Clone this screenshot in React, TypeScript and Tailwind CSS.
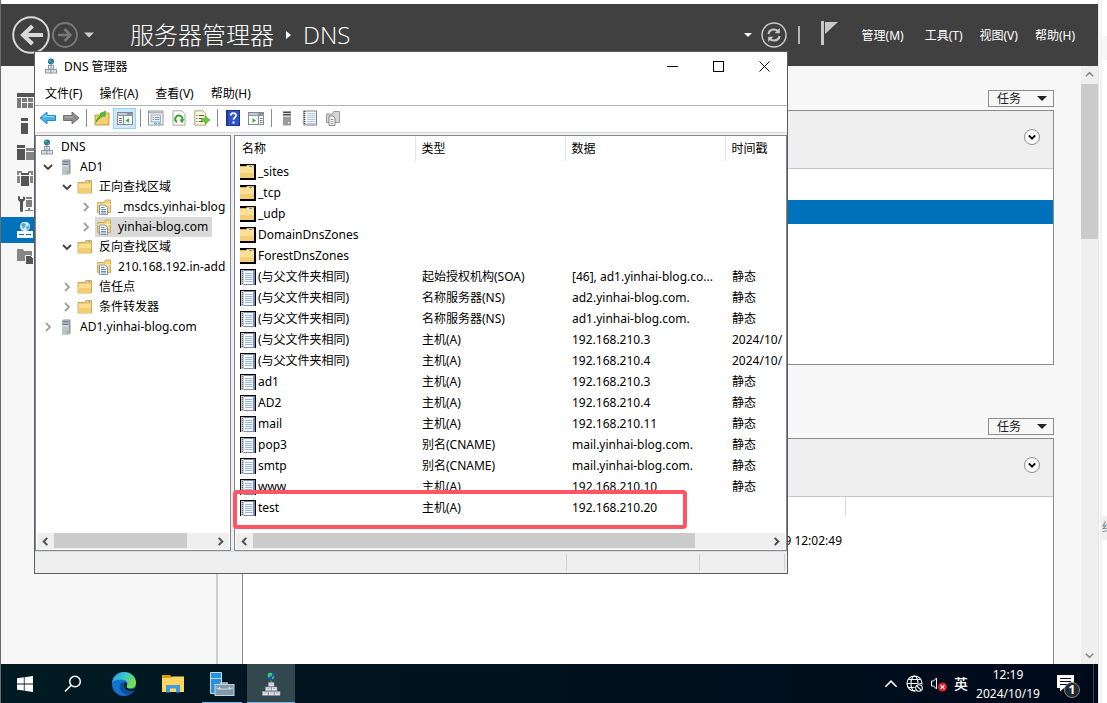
import React from 'react';

type IconProps = { className?: string };

type TreeNode = {
    level: number;
    label: string;
    icon: 'dns' | 'server' | 'folder' | 'zone';
    state?: 'open' | 'closed';
    selected?: boolean;
};

type DnsRecord = {
    name: string;
    type?: string;
    data?: string;
    stamp?: string;
};

const TREE: TreeNode[] = [
    { level: 0, label: 'DNS', icon: 'dns' },
    { level: 1, label: 'AD1', icon: 'server', state: 'open' },
    { level: 2, label: '正向查找区域', icon: 'folder', state: 'open' },
    { level: 3, label: '_msdcs.yinhai-blog', icon: 'zone', state: 'closed' },
    { level: 3, label: 'yinhai-blog.com', icon: 'zone', state: 'closed', selected: true },
    { level: 2, label: '反向查找区域', icon: 'folder', state: 'open' },
    { level: 3, label: '210.168.192.in-add', icon: 'zone' },
    { level: 2, label: '信任点', icon: 'folder', state: 'closed' },
    { level: 2, label: '条件转发器', icon: 'folder', state: 'closed' },
    { level: 1, label: 'AD1.yinhai-blog.com', icon: 'server', state: 'closed' },
];

const RECORDS: DnsRecord[] = [
    { name: '_sites' },
    { name: '_tcp' },
    { name: '_udp' },
    { name: 'DomainDnsZones' },
    { name: 'ForestDnsZones' },
    { name: '(与父文件夹相同)', type: '起始授权机构(SOA)', data: '[46], ad1.yinhai-blog.co...', stamp: '静态' },
    { name: '(与父文件夹相同)', type: '名称服务器(NS)', data: 'ad2.yinhai-blog.com.', stamp: '静态' },
    { name: '(与父文件夹相同)', type: '名称服务器(NS)', data: 'ad1.yinhai-blog.com.', stamp: '静态' },
    { name: '(与父文件夹相同)', type: '主机(A)', data: '192.168.210.3', stamp: '2024/10/' },
    { name: '(与父文件夹相同)', type: '主机(A)', data: '192.168.210.4', stamp: '2024/10/' },
    { name: 'ad1', type: '主机(A)', data: '192.168.210.3', stamp: '静态' },
    { name: 'AD2', type: '主机(A)', data: '192.168.210.4', stamp: '静态' },
    { name: 'mail', type: '主机(A)', data: '192.168.210.11', stamp: '静态' },
    { name: 'pop3', type: '别名(CNAME)', data: 'mail.yinhai-blog.com.', stamp: '静态' },
    { name: 'smtp', type: '别名(CNAME)', data: 'mail.yinhai-blog.com.', stamp: '静态' },
    { name: 'www', type: '主机(A)', data: '192.168.210.10', stamp: '静态' },
    { name: 'test', type: '主机(A)', data: '192.168.210.20' },
];

const LEVEL_INDENT = ['pl-0.5', 'pl-0.5', 'pl-[21px]', 'pl-10'];

/* ---------- small drawings ---------- */

function DnsIcon({ className = 'size-4' }: IconProps) {
    return (
        <svg viewBox="0 0 16 16" className={className} aria-hidden="true">
            <circle cx="8" cy="3.5" r="3" fill="#2468b8" />
            <path d="M5.8 2.2l2-1 .8 1.3-1.2 1.6-1.6-.3zM8.6 4l1.800-.4-.6 2-1.400.4z" fill="#45c552" />
            <path d="M8 6.500v1.500" stroke="#7b8490" />
            <g fill="#e6e9ee" stroke="#87909d" strokeWidth=".9">
                <rect x="5.500" y="7.500" width="5" height="3.500" />
                <rect x="2.500" y="11.500" width="5.500" height="3.500" />
                <rect x="8" y="11.500" width="5.500" height="3.500" />
            </g>
            <path d="M7 9h2M4.500 13h1.500M10 13h1.500" stroke="#87909d" strokeWidth=".8" />
        </svg>
    );
}

function DnsTaskIcon() {
    return (
        <svg viewBox="0 0 24 24" className="size-6" aria-hidden="true">
            <circle cx="12" cy="4" r="4" fill="#1b4fb0" />
            <path d="M9 1.500l3-1 1.500 1.500-1 2-1.500.5L10 6 8.500 3.500zM13 5l2.500-1-.8 2.500-1.700 1z" fill="#39d04a" />
            <path d="M12 8.500v2" stroke="#9aa4aa" />
            <g fill="#e4e2ea" stroke="#8f98a0" strokeWidth=".6">
                <rect x="9.500" y="10.500" width="5.500" height="3.800" />
                <rect x="6.500" y="15" width="5.500" height="3.800" />
                <rect x="12.500" y="15" width="5.500" height="3.800" />
                <rect x="3.500" y="19.500" width="5.500" height="3.800" />
                <rect x="9.500" y="19.500" width="5.500" height="3.800" />
                <rect x="15.500" y="19.500" width="5.500" height="3.800" />
            </g>
            <path d="M11 12h2.500M8 16.500h2.500M14 16.500h2.500M5 21h2.500M11 21h2.500M17 21h2.500" stroke="#9a9fa8" strokeWidth=".7" />
        </svg>
    );
}

function ServerIcon({ className = 'size-4' }: IconProps) {
    return (
        <svg viewBox="0 0 16 16" className={className} aria-hidden="true">
            <path d="M4 1.500L5.500.5h7v14l-1.500 1H4z" fill="#8d9ba5" />
            <rect x="4" y="1.500" width="7" height="14" fill="#b9c5cc" />
            <path d="M4.500 3h6M4.500 5h6" stroke="#33414b" strokeWidth="1" />
            <path d="M4.500 4h6M4.500 7h6" stroke="#eef3f6" strokeWidth=".8" />
            <circle cx="9.500" cy="13" r="1.200" fill="#6fd23b" />
        </svg>
    );
}

function FolderIcon({ className = 'size-4' }: IconProps) {
    return (
        <svg viewBox="0 0 16 16" className={className} aria-hidden="true">
            <path d="M1 3.500h7l1-2h5.500v12.500H1z" fill="#e3b95a" stroke="#c49b45" strokeWidth=".8" />
            <rect x="10" y="2" width="3.500" height="1.200" fill="#fff" />
            <rect x="11.500" y="2" width="1.500" height="1.200" fill="#4d9ad8" />
            <path d="M1.500 4.500H14v9.200H1.500z" fill="#fbdf8e" />
            <path d="M1.500 9H14v4.700H1.500z" fill="#f3cd72" />
        </svg>
    );
}

function ZoneIcon({ className = 'size-4' }: IconProps) {
    return (
        <svg viewBox="0 0 16 16" className={className} aria-hidden="true">
            <path d="M1.500 3.500h7l1-2.500h5v12.500h-13z" fill="#f5d680" stroke="#c49b45" strokeWidth=".8" />
            <path d="M1.500 5.500h13" stroke="#fdeeb8" />
            <path d="M3.500 6H9l2.500 2.500v7.100h-8z" fill="#fff" stroke="#7b8794" strokeWidth=".9" />
            <path d="M5 8.500h3.500M5 10.500h5M5 12.500h5M5 14h5" stroke="#3f7fc1" strokeWidth=".9" />
        </svg>
    );
}

function RecordIcon() {
    return (
        <svg viewBox="0 0 16 16" className="size-4 shrink-0" aria-hidden="true">
            <rect width="16" height="16" fill="#000" />
            <rect x="1" y="1" width="14" height="15" fill="#7d8ab8" />
            <rect x="4" y="2" width="9" height="13" fill="#fff" />
            <path d="M5 4.500h7.500M5 6.500h7.500M5 8.500h7.500M5 10.500h7.500M5 12.500h7.500" stroke="#8fb8dc" />
            <rect x="1" y="1" width="3" height="15" fill="#c4c7cd" />
            <path d="M2.500 2v13" stroke="#686c74" strokeDasharray="1 1" />
        </svg>
    );
}

function RecordFolderIcon() {
    return (
        <svg viewBox="0 0 16 16" className="size-4 shrink-0" aria-hidden="true">
            <rect width="16" height="16" fill="#000" />
            <path d="M0 2h6l1-1h7v13H0z" fill="#e0b65c" />
            <path d="M0 3h14v11H0z" fill="#fbe096" />
            <path d="M0 9h14v5H0z" fill="#f4ce76" />
            <rect x="7" y="2" width="6" height="1" fill="#fff" />
            <rect x="9" y="2" width="3" height="1" fill="#4d9ad8" />
        </svg>
    );
}

function Chevron({ dir, className = 'size-2.5', weight = 1.8 }: { dir: 'up' | 'down' | 'left' | 'right'; className?: string; weight?: number }) {
    const paths = {
        up: 'M1 7l4-4 4 4',
        down: 'M1 3l4 4 4-4',
        left: 'M7 1L3 5l4 4',
        right: 'M3 1l4 4-4 4',
    };
    return (
        <svg viewBox="0 0 10 10" className={className} fill="none" stroke="currentColor" strokeWidth={weight} aria-hidden="true">
            <path d={paths[dir]} />
        </svg>
    );
}

function Caret({ className = '' }: IconProps) {
    return (
        <svg viewBox="0 0 10 5" className={className} aria-hidden="true">
            <path d="M0 0h10L5 5z" fill="currentColor" />
        </svg>
    );
}

/* ---------- server manager (behind) ---------- */

const NAV_ICONS = [
    <g key="dash" fill="#7a7a7a">
        <rect x="0" y="1" width="18" height="4" fill="#555" />
        <path d="M0 6h4v10H0zM5 6h5v4H5zM11 6h5v4h-5zM5 11h5v5H5zM11 11h5v5h-5zM17 6h1v10h-1z" />
    </g>,
    <path key="local" d="M4 0h7v3H4zM4 5h7v11H4z" fill="#555" />,
    <g key="all">
        <path d="M0 1h8v3H0zM0 5h8v11H0z" fill="#555" />
        <path d="M9 4h8v3H9zM9 8h8v8H9z" fill="#858585" />
    </g>,
    <g key="ad">
        <path d="M0 1h5v2H2v2H0zM0 6h3v7H0zM16 1h-5v2h3v2h2zM13 6h3v7h-3z" fill="#858585" />
        <path d="M4 3h8v2H4zM4 6h8v10H4z" fill="#555" />
    </g>,
    <g key="dhcp" fill="#555">
        <path d="M1 0L1 4l2 2v8.500a1.500 1.500 0 0 0 3 0V6l2-2V1L6 .5V3H3V.5z" />
        <path d="M9 1h6v2H9zM9 4h6v7H9zM11 12h2v2h3v1H8v-1h3z" fill="#808080" />
    </g>,
    <g key="dns">
        <circle cx="8" cy="4.500" r="5" fill="#d4e8f5" />
        <path d="M4 3l2-2 3 1-1 3-2 2-1-3zM9 5l3-2v3l-2 2z" fill="#59a3d8" />
        <path d="M0 9h16v7H0z" fill="#fff" />
        <path d="M2 12.500h5M9 12.500h5" stroke="#0072bc" />
    </g>,
    <g key="file">
        <path d="M0 1h6l1 2h8v10H0z" fill="#858585" />
        <path d="M8.500 7.500h5l3 3v6h-8z" fill="#555" stroke="#f7f7f7" />
    </g>,
];

function ServerManagerHeader() {
    return (
        <header className="h-[62px] shrink-0 flex items-center bg-[#404040] text-white pl-2.5 pr-[23px]">
            <button type="button" aria-label="后退" className="flex">
                <svg viewBox="0 0 40 40" className="size-10" fill="none">
                    <circle cx="20" cy="20" r="17.800" stroke="#d9d9d9" strokeWidth="2" />
                    <path d="M32 20H13M21.500 11L12 20l9.500 9" stroke="#d9d9d9" strokeWidth="4" />
                </svg>
            </button>
            <button type="button" aria-label="前进" className="flex">
                <svg viewBox="0 0 28 28" className="size-7" fill="none" stroke="#7a7a7a">
                    <circle cx="14" cy="14" r="12" strokeWidth="1.800" />
                    <path d="M7 14h12M13.500 8l6 6-6 6" strokeWidth="2.500" />
                </svg>
            </button>
            <Caret className="ml-[5px] w-2.5 h-1.5 text-[#cccccc]" />
            <h1 className="ml-9 flex items-center text-2xl font-light whitespace-nowrap font-['Open_Sans','Noto_Sans_CJK_SC',sans-serif]">
                服务器管理器
                <svg viewBox="0 0 5 8" className="mx-3 w-[5px] h-2" aria-hidden="true">
                    <path d="M0 0l5 4-5 4z" fill="#fff" />
                </svg>
                DNS
            </h1>
            <div className="ml-auto flex items-center">
                <Caret className="w-2 h-1" />
                <button type="button" aria-label="刷新" className="ml-2 flex">
                    <svg viewBox="0 0 28 28" className="size-7" fill="none" stroke="#c8c8c8">
                        <circle cx="14" cy="14" r="12" strokeWidth="1.500" />
                        <path d="M8.500 13c.5-3 3-4.500 5.500-4.500 2 0 3.500.8 4.600 2.400M19.500 15c-.5 3-3 4.500-5.500 4.500-2 0-3.500-.8-4.600-2.400" strokeWidth="2.200" />
                        <path d="M19.800 7v5.200h-5.200zM8.200 21v-5.200h5.200z" fill="#c8c8c8" stroke="none" />
                    </svg>
                </button>
                <span className="ml-2.5 w-0.5 h-[18px] bg-[#b4b4b4]" />
                <button type="button" aria-label="通知" className="ml-5 mb-1 flex">
                    <svg viewBox="0 0 18 26" className="w-[18px] h-[26px]">
                        <path d="M1 1h3v24H1zM5 2h13L5 14z" fill="#c8c8c8" />
                    </svg>
                </button>
                <nav className="ml-6 flex gap-[17px] pt-px text-xs whitespace-nowrap">
                    <button type="button" className="mr-1">管理(M)</button>
                    <button type="button">工具(T)</button>
                    <button type="button">视图(V)</button>
                    <button type="button">帮助(H)</button>
                </nav>
            </div>
        </header>
    );
}

function TaskButton() {
    return (
        <button
            type="button"
            className="self-end flex items-center justify-between w-[66px] h-[17px] pl-2 pr-1.5 border border-[#8c8c8c] bg-[#f7f7f7] text-xs text-[#222]"
        >
            任务
            <Caret className="w-2.5 h-[5px]" />
        </button>
    );
}

function PanelHeader() {
    return (
        <div className="h-[58px] shrink-0 flex items-start justify-end pt-[18px] pr-[13px] bg-[#efefef] border-b border-[#c6c6c6]">
            <button type="button" aria-label="展开" className="size-4 rounded-full border border-[#8c8c8c] bg-white flex items-center justify-center">
                <Chevron dir="down" className="size-2" weight={2.4} />
            </button>
        </div>
    );
}

function ServerManager() {
    return (
        <div className="flex-1 min-h-0 flex bg-[#f7f7f7]">
            <nav className="w-[217px] shrink-0 border-r-2 border-[#cfcfcf] pt-[21px]">
                {NAV_ICONS.map((icon, i) => (
                    <a
                        key={i}
                        href="#"
                        aria-label="导航"
                        className={`flex items-center h-[26px] pl-4 ${i === 5 ? 'bg-[#0072bc]' : ''}`}
                    >
                        <svg viewBox="0 0 18 17" className="w-[18px] h-[17px]">{icon}</svg>
                    </a>
                ))}
            </nav>
            <main className="flex-1 min-w-0 flex flex-col pl-6 pr-[27px] pt-6 overflow-hidden">
                <TaskButton />
                <section className="mt-[3px] h-[255px] shrink-0 border border-[#8c8c8c] bg-white">
                    <PanelHeader />
                    <div className="mt-[31px] h-6 bg-[#0072bc]" />
                </section>
                <div className="h-[53px] shrink-0" />
                <TaskButton />
                <section className="mt-[3px] flex-1 flex flex-col border border-b-0 border-[#8c8c8c] bg-white">
                    <PanelHeader />
                    <div className="w-[603px] h-[18px] border-r border-[#d8d8d8]" />
                    <p className="w-[603px] pt-[18px] pr-1 text-right text-xs">2024/10/19 12:02:49</p>
                </section>
            </main>
            <div className="w-[17px] shrink-0 flex flex-col items-center bg-[#efefef] text-[#8a8a8a]">
                <Chevron dir="up" className="size-[9px] my-1" />
                <div className="w-full h-[155px] mt-px bg-[#cbcbcb]" />
                <Chevron dir="down" className="size-[9px] mt-auto mb-1" />
            </div>
        </div>
    );
}

/* ---------- DNS console window ---------- */

function ToolButton({ label, active, children }: { label: string; active?: boolean; children: React.ReactNode }) {
    return (
        <button
            type="button"
            aria-label={label}
            className={`w-[23px] h-[21px] flex items-center justify-center ${active ? 'bg-[#cce8ff] border border-[#99d1ff]' : ''}`}
        >
            <svg viewBox="0 0 16 16" className="size-4 shrink-0">{children}</svg>
        </button>
    );
}

function ToolSeparator() {
    return <span className="mx-[3px] w-0.5 h-[18px] border-r border-[#8d8d8d]" />;
}

function Toolbar() {
    return (
        <div className="h-[27px] flex items-center pl-px pb-0.5 border-b border-[#d9d9d9]">
            <ToolButton label="后退">
                <path d="M0 8l7-6v3.500h8.500v5H7V14z" fill="#45b4ee" stroke="#1f78bd" strokeWidth=".9" />
                <path d="M3 7.500l3-2.500v1.500h8" stroke="#a5e0fb" fill="none" />
            </ToolButton>
            <ToolButton label="前进">
                <path d="M16 8L9 2v3.500H.5v5H9V14z" fill="#8e8e8e" stroke="#666" strokeWidth=".9" />
                <path d="M2 7h8" stroke="#bcbcbc" />
            </ToolButton>
            <ToolSeparator />
            <ToolButton label="上一级">
                <path d="M1 5h7l1-2h6v12H1z" fill="#f4cf74" stroke="#b58b32" strokeWidth=".8" />
                <path d="M2 12c1-4 3-6 5-7l-1-1.500L11.500 1 11 6.500 9 6c-2 1-4 3-7 6z" fill="#54c12e" stroke="#2f8a18" strokeWidth=".5" />
            </ToolButton>
            <ToolButton label="显示/隐藏控制台树" active>
                <rect x=".5" y="2.500" width="15" height="12" fill="#fff" stroke="#7f8994" />
                <path d="M0 3h16v3H0z" fill="#8b95a0" />
                <path d="M1 4h9" stroke="#fff" />
                <path d="M6.500 6v8" stroke="#7f8994" />
                <path d="M2 8.500h3M2 10.500h3M2 12.500h3" stroke="#6d7884" />
                <path d="M12 8v5l-3.500-2.500z" fill="#3faf2e" />
            </ToolButton>
            <ToolSeparator />
            <ToolButton label="属性">
                <rect x=".5" y="1" width="14.500" height="14" fill="#fff" stroke="#8b95a0" />
                <path d="M1 2.500h14" stroke="#aeb6c0" strokeWidth="2" />
                <rect x="3" y="5" width="9.500" height="7" fill="#eef2f6" stroke="#8b95a0" strokeWidth=".8" />
                <path d="M4.500 7.500h1.500M7 7.500h4.500M4.500 9.500h1.500M7 9.500h4.500" stroke="#4a6da0" strokeWidth=".7" />
                <path d="M6 13.500h3M10 13.500h3" stroke="#40b8e8" strokeWidth="1.500" />
            </ToolButton>
            <ToolButton label="刷新">
                <path d="M2 .8h9l3 3v11.400H2z" fill="#fff" stroke="#a0a0a0" strokeWidth=".9" />
                <path d="M6 12.200A3.600 3.600 0 1 1 11.400 9.500" fill="none" stroke="#36a532" strokeWidth="2" />
                <path d="M13.500 9l-2.500 4.500-2.500-4z" fill="#36a532" />
            </ToolButton>
            <ToolButton label="导出列表">
                <path d="M.8.8h8l3 3v11.400H.8z" fill="#fdf8dc" stroke="#a69a70" strokeWidth=".9" />
                <path d="M2.500 5.500h1M5 5.500h5M2.500 8.500h1M5 8.500h3M2.500 11.500h1M5 11.500h3" stroke="#555" />
                <path d="M7.500 8.500H11V6l5 4-5 4v-2.500H7.500z" fill="#6acb3c" stroke="#3b9421" strokeWidth=".6" />
            </ToolButton>
            <ToolSeparator />
            <ToolButton label="帮助">
                <rect x="1.500" y=".5" width="13" height="15" fill="#2d53c4" stroke="#1c3487" />
                <path d="M2.500 1v14" stroke="#1c3487" />
                <path d="M5.800 5.600c0-3.400 5.200-3.200 5.200-.2 0 2-2.500 2-2.500 4.400" fill="none" stroke="#fff" strokeWidth="1.800" />
                <rect x="7.500" y="11.500" width="2" height="2" fill="#fff" />
            </ToolButton>
            <ToolButton label="显示/隐藏操作窗格">
                <rect x=".5" y="2.500" width="15" height="12" fill="#fff" stroke="#7f8994" />
                <path d="M0 3h16v3H0z" fill="#8b95a0" />
                <path d="M1 4h9" stroke="#fff" />
                <path d="M10.500 6v8" stroke="#7f8994" />
                <path d="M12 8.500h2.500M12 10.500h2.500M12 12.500h2.500" stroke="#6d7884" />
                <path d="M4.500 8v5L8 10.500z" fill="#3faf2e" />
            </ToolButton>
            <ToolSeparator />
            <ToolButton label="新建服务器">
                <path d="M4 1h8v14.500H4z" fill="#9b9b9b" />
                <path d="M4.500 2.500h7M4.500 4.500h7" stroke="#444" />
                <path d="M4.500 3.500h7M4.500 6.500h7" stroke="#ddd" />
                <rect x="9" y="12" width="1.500" height="1.500" fill="#eee" />
            </ToolButton>
            <ToolButton label="新建记录">
                <rect x="2" y="1" width="12.500" height="14" fill="#fff" stroke="#77808c" />
                <path d="M5 3.500h8.500M5 5.500h8.500M5 7.500h8.500M5 9.500h8.500M5 11.500h8.500M5 13.500h8.500" stroke="#a9c6e2" />
                <path d="M2.500 1v14" stroke="#555" strokeWidth="2" strokeDasharray="1 1" />
            </ToolButton>
            <ToolButton label="新建区域">
                <path d="M1.500 4h6l1-2.500h6v11h-13z" fill="#d5d5d5" stroke="#9a9a9a" />
                <path d="M4 6h4l2 2v7.500H4z" fill="#fff" stroke="#777" strokeWidth=".9" />
                <path d="M5.500 9.500h3M5.500 11.500h3M5.500 13.500h3" stroke="#888" strokeWidth=".9" />
            </ToolButton>
        </div>
    );
}

function TreeIcon({ icon }: { icon: TreeNode['icon'] }) {
    if (icon === 'dns') return <DnsIcon />;
    if (icon === 'server') return <ServerIcon />;
    if (icon === 'folder') return <FolderIcon />;
    return <ZoneIcon />;
}

function ScrollBar({ thumb }: { thumb: string }) {
    return (
        <div className="h-4 shrink-0 flex items-center bg-[#efefef] text-[#505050]">
            <span className="w-[17px] flex justify-center"><Chevron dir="left" className="size-[9px]" weight={2.2} /></span>
            <div className="flex-1 self-stretch">
                <div className={`h-[15px] bg-[#cbcbcb] ${thumb}`} />
            </div>
            <span className="w-[17px] flex justify-center"><Chevron dir="right" className="size-[9px]" weight={2.2} /></span>
        </div>
    );
}

function TreePane() {
    return (
        <div className="w-[196px] shrink-0 flex flex-col border border-[#828790] bg-white">
            <ul className="flex-1 pt-px mr-0.5 overflow-hidden whitespace-nowrap">
                {TREE.map((node) => (
                    <li key={node.label} className={`flex h-5 items-center ${LEVEL_INDENT[node.level]}`}>
                        {node.level > 0 && (
                            <span className="w-[19px] shrink-0 flex justify-center">
                                {node.state && (
                                    <Chevron
                                        dir={node.state === 'open' ? 'down' : 'right'}
                                        className={node.state === 'open' ? 'size-2.5 text-[#404040]' : 'size-2.5 text-[#a0a0a0]'}
                                    />
                                )}
                            </span>
                        )}
                        <span className={`flex items-center h-5 pr-1 ${node.selected ? 'bg-[#d9d9d9]' : ''}`}>
                            <span className="w-[18px] mr-[5px] flex justify-center"><TreeIcon icon={node.icon} /></span>
                            {node.label}
                        </span>
                    </li>
                ))}
            </ul>
            <div className="px-px pb-px">
                <ScrollBar thumb="w-[133px]" />
            </div>
        </div>
    );
}

function RecordPane() {
    return (
        <div className="flex-1 min-w-0 flex flex-col border border-[#828790] bg-white">
            <div className="flex-1 mr-0.5 overflow-hidden">
                <table className="w-full table-fixed border-collapse whitespace-nowrap text-left">
                    <colgroup>
                        <col className="w-[180px]" />
                        <col className="w-[150px]" />
                        <col className="w-[160px]" />
                        <col />
                    </colgroup>
                    <thead>
                        <tr className="h-[25px]">
                            <th className="p-0 pl-[7px] font-normal border-r border-[#e3e3e3]">名称</th>
                            <th className="p-0 pl-1.5 font-normal border-r border-[#e3e3e3]">类型</th>
                            <th className="p-0 pl-1.5 font-normal border-r border-[#e3e3e3]">数据</th>
                            <th className="p-0 pl-1.5 font-normal">时间戳</th>
                        </tr>
                    </thead>
                    <tbody>
                        {RECORDS.map((record, i) => (
                            <tr key={i} className="h-[21px]">
                                <td className="p-0 pl-[5px]">
                                    <span className="flex items-center gap-0.5">
                                        {record.type ? <RecordIcon /> : <RecordFolderIcon />}
                                        {record.name}
                                    </span>
                                </td>
                                <td className="p-0 pl-[7px]">{record.type}</td>
                                <td className="p-0 pl-[7px]">{record.data}</td>
                                <td className="p-0 pl-[7px]">{record.stamp}</td>
                            </tr>
                        ))}
                    </tbody>
                </table>
            </div>
            <div className="px-px pb-px">
                <ScrollBar thumb="w-[442px]" />
            </div>
        </div>
    );
}

function DnsWindow() {
    return (
        <section className="absolute left-[33px] top-[51px] w-[754px] h-[523px] flex flex-col border border-[#5c5c5c] bg-white text-xs text-black">
            <div className="h-7 flex items-center">
                <DnsIcon className="ml-2 size-4" />
                <h2 className="ml-[5px] pt-px">DNS 管理器</h2>
                <div className="ml-auto self-stretch flex">
                    <button type="button" aria-label="最小化" className="w-[46px] flex items-center justify-center">
                        <span className="w-[11px] h-px bg-black" />
                    </button>
                    <button type="button" aria-label="最大化" className="w-[46px] flex items-center justify-center">
                        <span className="size-[11px] border border-black" />
                    </button>
                    <button type="button" aria-label="关闭" className="w-[46px] flex items-center justify-center">
                        <svg viewBox="0 0 11 11" className="size-[11px]">
                            <path d="M.5.5l10 10M10.500.5l-10 10" stroke="#000" />
                        </svg>
                    </button>
                </div>
            </div>
            <nav className="h-[26px] flex items-center gap-px pl-0.5 pt-0.5 border-b border-[#b4b4b4]">
                <button type="button" className="px-2">文件(F)</button>
                <button type="button" className="px-2">操作(A)</button>
                <button type="button" className="px-2">查看(V)</button>
                <button type="button" className="px-2">帮助(H)</button>
            </nav>
            <Toolbar />
            <div className="relative flex-1 min-h-0 flex gap-[3px] pt-0.5 bg-[#efefef]">
                <TreePane />
                <RecordPane />
                {/* Highlight around the new record */}
                <div className="absolute left-[198px] top-[357px] w-[454px] h-[39px] border-4 border-[#ff5464] rounded-sm" />
            </div>
            <footer className="h-[22px] flex py-0.5 bg-[#efefef] border-t border-[#dcdcdc]">
                <span className="flex-1" />
                <span className="w-[133px] border-l border-[#d0d0d0]" />
                <span className="w-[86px] mr-0.5 border-x border-[#d0d0d0]" />
            </footer>
        </section>
    );
}

/* ---------- taskbar ---------- */

function Taskbar() {
    return (
        <footer className="h-[39px] shrink-0 flex bg-linear-to-r from-[#001a22] to-[#000a1a] text-white">
            <button type="button" aria-label="开始" className="w-12 flex items-center justify-center">
                <svg viewBox="0 0 16 16" className="size-4" fill="#fff">
                    <path d="M0 2.300l6.800-1v6.200H0zM7.600 1.200L16 0v7.500H7.600zM0 8.400h6.800v6.200L0 13.700zM7.600 8.400H16V16l-8.400-1.200z" />
                </svg>
            </button>
            <button type="button" aria-label="搜索" className="w-12 flex items-center justify-center">
                <svg viewBox="0 0 18 18" className="size-[18px]" fill="none" stroke="#fff" strokeWidth="1.500">
                    <circle cx="11" cy="6.500" r="5.300" />
                    <path d="M7.200 10.300L1 16.500" />
                </svg>
            </button>
            <div className="ml-0.5 flex gap-px">
                <button type="button" aria-label="Microsoft Edge" className="w-12 flex items-center justify-center ml-px">
                    <svg viewBox="0 0 24 24" className="size-6">
                        <defs>
                            <linearGradient id="edgeTop" x1="0" x2="1" y1="0" y2=".5">
                                <stop offset="0" stopColor="#1f9be4" />
                                <stop offset=".5" stopColor="#36c6cf" />
                                <stop offset="1" stopColor="#7be04a" />
                            </linearGradient>
                        </defs>
                        <circle cx="12" cy="12" r="12" fill="#1274cf" />
                        <path d="M0 11C1 4 6 0 12 0c7 0 12 5 12 10.500 0 4-3 6-6 6s-4.500-1.300-3.500-2.500c2.500-3-.5-6.500-5-6.500S1 8.500 0 11z" fill="url(#edgeTop)" />
                        <path d="M8 12.500c-1.500 5 2.500 10 8 10.500 3-.8 5.300-2.600 6.500-5-5 2.300-10.500.8-10.500-4.500 0-1.500.8-2.500 1.800-3C11 9.800 8.700 10.500 8 12.500z" fill="#0b4fa0" />
                        <path d="M12 13c0 5 5 7.300 10.500 5.200l1.500 2v-4.500c-3.500 2-10 1.300-9.500-1.700 1-1.500.8-3-.7-3.700C12.600 10.800 12 12 12 13z" fill="#001a22" />
                    </svg>
                </button>
                <button type="button" aria-label="文件资源管理器" className="w-12 flex items-center justify-center">
                    <svg viewBox="0 0 22 20" className="w-[22px] h-5">
                        <path d="M0 1h8l2 2h12v4H0z" fill="#e09a12" />
                        <path d="M0 4h9l1.500-1.500H22V18H0z" fill="#ffd75e" />
                        <path d="M4 18.500v-7.500h14v7.500h-4v-4H8v4z" fill="#3e9ce0" />
                    </svg>
                </button>
                <button type="button" aria-label="服务器管理器" className="w-12 flex justify-center">
                    <span className="w-10 h-full flex items-center justify-center border-b border-[#76b9ed] pt-0.5">
                        <svg viewBox="0 0 26 26" className="size-[26px]">
                            <path d="M1.500 1.500h11v21h-11z" fill="#2493dc" stroke="#b8def5" />
                            <path d="M2 7.500h10" stroke="#b8def5" />
                            <path d="M12 13.500v-1.500h6v1.500" fill="none" stroke="#c8d4dc" strokeWidth="1.500" />
                            <rect x="6" y="13.500" width="19" height="11" fill="#7f9aab" stroke="#c5d3dc" />
                            <path d="M7 17c4 1.500 13 1.500 17 0" fill="none" stroke="#dfe8ee" strokeWidth=".8" />
                            <path d="M10.500 16v2.500M20.500 16v2.500" stroke="#fff" />
                        </svg>
                    </span>
                </button>
                <button type="button" aria-label="DNS 管理器" className="w-12 flex items-center justify-center bg-[#33474f] border-b border-[#76b9ed] pt-0.5">
                    <DnsTaskIcon />
                </button>
            </div>
            <div className="ml-auto flex items-center">
                <Chevron dir="up" className="size-3.5" weight={1.1} />
                <svg viewBox="0 0 18 18" className="ml-2 size-[18px]" fill="none" stroke="#fff" strokeWidth="1.100" aria-hidden="true">
                    <circle cx="8.500" cy="8.500" r="7.500" />
                    <ellipse cx="8.500" cy="8.500" rx="3.500" ry="7.500" />
                    <path d="M1 8.500h15M2 4.500h13M2 12.500h8" />
                    <circle cx="13" cy="13" r="4.500" fill="#000d1c" stroke="none" />
                    <circle cx="13" cy="13" r="3.300" />
                    <path d="M10.800 10.800l4.400 4.400" />
                </svg>
                <svg viewBox="0 0 18 16" className="ml-1.5 w-[18px] h-4" aria-hidden="true">
                    <path d="M1.500 5h2L6.500 2v11L3.500 10h-2z" fill="none" stroke="#fff" strokeWidth="1" />
                    <circle cx="12.500" cy="11" r="4.500" fill="#e0222e" />
                    <path d="M10.700 9.200l3.600 3.600M14.300 9.200l-3.600 3.600" stroke="#fff" strokeWidth="1.200" />
                </svg>
                <span className="ml-1.5 text-sm font-medium">英</span>
                <div className="ml-1.5 w-[68px] text-center text-xs leading-[19px]">
                    <div>12:19</div>
                    <div>2024/10/19</div>
                </div>
                <button type="button" aria-label="通知" className="ml-3.5 mt-1 flex">
                    <svg viewBox="0 0 26 26" className="size-[26px]" aria-hidden="true">
                        <path d="M1 2h17v13H8l-4 3.500V15H1z" fill="#fff" />
                        <path d="M4 5.500h11M4 8.500h11M4 11.500h7" stroke="#000a1a" />
                        <circle cx="16" cy="17" r="7.500" fill="#26292e" stroke="#85888c" />
                        <text x="16" y="21" textAnchor="middle" fill="#fff" fontSize="12" fontWeight="700">1</text>
                    </svg>
                </button>
                <span className="ml-[11px] mr-1 w-px self-stretch bg-[#3c4656]" />
            </div>
        </footer>
    );
}

export default function App() {
    return (
        <div className="h-screen flex bg-white overflow-hidden font-['Noto_Sans','Noto_Sans_CJK_SC',sans-serif]">
            <div className="relative flex-1 min-w-0 flex flex-col border-l border-[#6b6b6b] pt-1">
                <ServerManagerHeader />
                <ServerManager />
                <Taskbar />
                <DnsWindow />
            </div>
            <aside className="w-[9px] shrink-0 border-l border-[#e4e4e4] pl-px">
                <div className="h-full border-l-2 border-[#f2f2f2] pt-9 overflow-hidden">
                    <div className="h-6 bg-[#f7f7f8]" />
                    <div className="mt-[456px] h-6 bg-[#f0f0f0] text-xs leading-6 text-[#777]">结</div>
                </div>
            </aside>
        </div>
    );
}
